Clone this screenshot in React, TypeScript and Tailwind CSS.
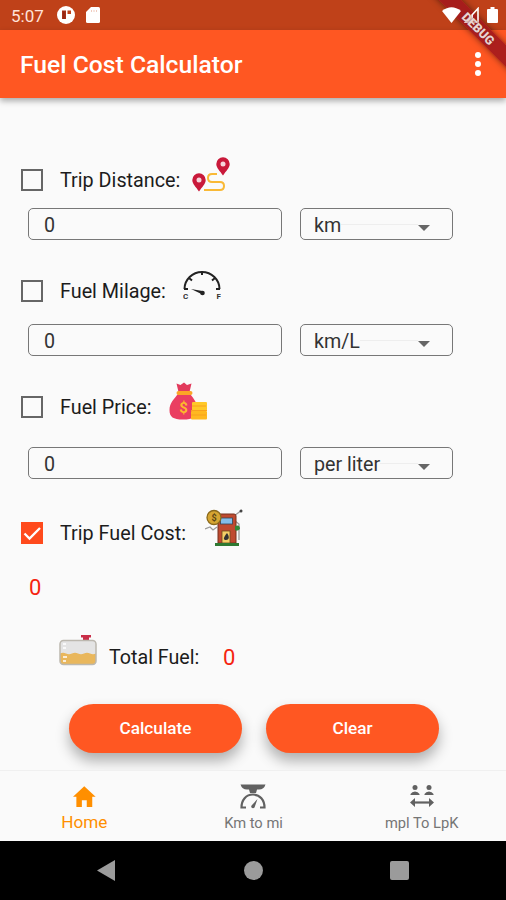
import { useState } from "react";
import type { ReactNode } from "react";

export default function App() {
    const [checked, setChecked] = useState("cost");

    return (
        <div className="relative flex h-[900px] w-[506px] flex-col overflow-hidden bg-[#fafafa] font-['Roboto',sans-serif] text-[#1c1c1c]">
            <DebugBanner />
            <StatusBar />
            <header className="flex h-[68px] shrink-0 items-center justify-between bg-[#ff5722] pr-[25px] pl-5 shadow-[0_3px_6px_rgba(0,0,0,0.32)]">
                <h1 className="pt-[3px] text-[24.7px] leading-none font-medium text-white">
                    Fuel Cost Calculator
                </h1>
                <button
                    className="flex flex-col gap-[2.500px]"
                    aria-label="Menu"
                >
                    <span className="size-[6.500px] rounded-full bg-white" />
                    <span className="size-[6.500px] rounded-full bg-white" />
                    <span className="size-[6.500px] rounded-full bg-white" />
                </button>
            </header>

            <main className="flex h-[672px] shrink-0 flex-col pt-[62px]">
                <FieldLabel
                    label="Trip Distance:"
                    checked={checked === "distance"}
                    onClick={() => setChecked("distance")}
                >
                    <div className="mb-[11px] ml-3">
                        <RouteIcon />
                    </div>
                </FieldLabel>
                <FieldInputs unit="km" className="mt-2" />

                <FieldLabel
                    label="Fuel Milage:"
                    checked={checked === "milage"}
                    onClick={() => setChecked("milage")}
                    className="mt-[31px]"
                >
                    <div className="mb-[7px] ml-[17px]">
                        <GaugeIcon />
                    </div>
                </FieldLabel>
                <FieldInputs unit="km/L" className="mt-[13px]" />

                <FieldLabel
                    label="Fuel Price:"
                    checked={checked === "price"}
                    onClick={() => setChecked("price")}
                    className="mt-[31px]"
                >
                    <div className="mb-[13px] ml-[18px]">
                        <MoneyBagIcon />
                    </div>
                </FieldLabel>
                <FieldInputs unit="per liter" className="mt-5" />

                <FieldLabel
                    label="Trip Fuel Cost:"
                    checked={checked === "cost"}
                    onClick={() => setChecked("cost")}
                    className="mt-[34px]"
                >
                    <div className="mb-[11px] ml-[19px]">
                        <PumpIcon />
                    </div>
                </FieldLabel>
                <p className="mt-[23px] ml-[29px] h-6 text-[22px] leading-6 text-[#f5240f]">
                    0
                </p>

                <div className="mt-[37px] ml-[59px] flex h-10 items-center text-[19.7px]">
                    <div className="mb-[13px] w-[50px]">
                        <TankIcon />
                    </div>
                    <span className="w-[114px] pt-px whitespace-nowrap">
                        Total Fuel:
                    </span>
                    <span className="text-[22px] text-[#f5240f]">0</span>
                </div>

                <div className="mt-[27px] ml-[69px] flex gap-6">
                    <PillButton>Calculate</PillButton>
                    <PillButton>Clear</PillButton>
                </div>
            </main>

            <nav className="relative grid h-[71px] shrink-0 grid-cols-3 border-t border-[#f0f0f0] bg-[#fafafa]">
                <div className="flex flex-col items-center pt-[11px] text-[#ff8f00]">
                    <svg width="30" height="30" viewBox="0 0 24 24">
                        <path
                            d="M10.300 20v-5.500h3.900V20h4.400v-8.300h2.700L12.200 3.400 3.200 11.700h2.700V20z"
                            fill="currentColor"
                        />
                    </svg>
                    <span className="text-[17.2px] leading-5">Home</span>
                </div>
                <div className="flex flex-col items-center pt-[11px] pl-[1px] text-[#616161]">
                    <ScaleIcon />
                    <span className="mt-[1px] text-[14.7px] leading-5 text-[#757575]">
                        Km to mi
                    </span>
                </div>
                <div className="flex flex-col items-center pt-[11px] text-[#616161]">
                    <DistanceIcon />
                    <span className="mt-[1px] text-[14.7px] leading-5 text-[#757575]">
                        mpl To LpK
                    </span>
                </div>
            </nav>

            <footer className="flex h-[59px] shrink-0 items-center justify-between bg-black px-[97px]">
                <svg width="18" height="21" viewBox="0 0 18 21">
                    <path d="M0 10.500 18 0v21z" fill="#9b9b9b" />
                </svg>
                <span className="ml-px size-[19px] rounded-full bg-[#9b9b9b]" />
                <span className="size-[19px] rounded-[2px] bg-[#9b9b9b]" />
            </footer>
        </div>
    );
}

function StatusBar() {
    return (
        <div className="flex h-[30px] shrink-0 items-center justify-between bg-[#bf4119] pr-2 pl-[11px] text-white">
            <div className="flex items-center">
                <span className="w-[46px] pt-[2px] text-[17px] leading-none text-[#ffe3da]">
                    5:07
                </span>
                <svg width="18" height="18" viewBox="0 0 18 18">
                    <circle cx="9" cy="9" r="9" fill="#fff" />
                    <path d="M5 4.500h4V13H5z" fill="#a8301a" />
                    <path d="M10.500 4.500H14V8h-3.500z" fill="#bf4119" />
                    <path d="M6.300 5.500h1.200V13H6.300z" fill="#8c2411" />
                </svg>
                <svg
                    className="ml-[11px]"
                    width="14"
                    height="16"
                    viewBox="0 0 14 16"
                >
                    <path
                        d="M5 0h7.500q1.500 0 1.500 1.500v13q0 1.500-1.500 1.500h-11Q0 16 0 14.500V5z"
                        fill="#fff"
                    />
                    <path d="M5.500 3v2M8 3v2M10.500 3v2" stroke="#f0cabd" />
                </svg>
            </div>
            <div className="relative z-20 flex items-center">
                <svg width="19" height="16" viewBox="0 0 19 16">
                    <path d="M0 4Q9.500-3.500 19 4L9.500 16z" fill="#fff" />
                </svg>
                <svg
                    className="ml-[3px]"
                    width="15"
                    height="16"
                    viewBox="0 0 15 16"
                >
                    <path
                        d="M1.500 15 14 1.500V15z"
                        fill="none"
                        stroke="#fff"
                        strokeWidth="1.600"
                    />
                    <path d="M1 15.500 9 7v8.500z" fill="#fff" />
                </svg>
                <svg
                    className="ml-[8px]"
                    width="11"
                    height="16"
                    viewBox="0 0 11 16"
                >
                    <path
                        d="M3.500 0h4v2H10q1 0 1 1v12q0 1-1 1H1q-1 0-1-1V3q0-1 1-1h2.500z"
                        fill="#fff"
                    />
                </svg>
            </div>
        </div>
    );
}

function DebugBanner() {
    return (
        <>
            <div className="pointer-events-none absolute top-[20px] left-[418px] z-10 h-4 w-[120px] rotate-45 bg-[#a3191d]/90 shadow-[0_0_6px_rgba(0,0,0,0.5)]" />
            <span className="pointer-events-none absolute top-[21px] left-[418px] z-30 w-[120px] rotate-45 text-center text-[12.500px] leading-4 font-black text-[#e9d3d0] [text-shadow:0_0_2px_#7c2020]">
                DEBUG
            </span>
        </>
    );
}

function FieldLabel({
    label,
    checked,
    onClick,
    className = "",
    children,
}: {
    label: string;
    checked: boolean;
    onClick: () => void;
    className?: string;
    children: ReactNode;
}) {
    return (
        <div
            className={`flex h-10 shrink-0 items-center pl-[21px] ${className}`}
        >
            <button
                onClick={onClick}
                aria-label={label}
                className={
                    checked
                        ? "size-[22px] bg-[#ff4a1c]"
                        : "size-[22px] border-2 border-[#666]"
                }
            >
                {checked && (
                    <svg width="22" height="22" viewBox="0 0 22 22">
                        <path
                            d="m3.500 11.500 5 5L19 6"
                            fill="none"
                            stroke="#fff"
                            strokeWidth="2.300"
                        />
                    </svg>
                )}
            </button>
            <span className="ml-[17px] pt-[2px] text-[19.8px] leading-none whitespace-nowrap">
                {label}
            </span>
            {children}
        </div>
    );
}

function FieldInputs({ unit, className }: { unit: string; className: string }) {
    return (
        <div className={`flex h-8 shrink-0 gap-[18px] pl-7 ${className}`}>
            <input
                defaultValue="0"
                className="w-[254px] rounded-[5px] border-[1.5px] border-[#777] px-[15px] pt-[3px] text-[19.7px] text-[#333] outline-none"
            />
            <button className="flex w-[153px] items-center rounded-[5px] border-[1.5px] border-[#777] pr-[22px] pl-[13px] text-[19.7px] text-[#333]">
                <span className="pt-[3px] whitespace-nowrap">{unit}</span>
                <span className="h-px flex-1 bg-[#eee]" />
                <svg
                    className="mt-[8px]"
                    width="12"
                    height="6"
                    viewBox="0 0 12 6"
                >
                    <path d="M0 0h12L6 6z" fill="#666" />
                </svg>
            </button>
        </div>
    );
}

function PillButton({ children }: { children: ReactNode }) {
    return (
        <button className="h-[49px] w-[173px] rounded-full bg-[#ff5722] text-[17.2px] font-medium text-white shadow-[0_8px_14px_rgba(0,0,0,0.3)]">
            {children}
        </button>
    );
}

function RouteIcon() {
    return (
        <svg width="38" height="38" viewBox="0 0 38 38">
            <path
                d="M12 34h16q4 0 4-4t-4-4h-8q-4 0-4-4t4-4h5"
                fill="none"
                stroke="#f9b936"
                strokeWidth="2"
            />
            <path
                d="M7 35.500C4 31 .3 28 .3 24a6.700 6.700 0 0 1 13.400 0C13.700 28 10 31 7 35.500z"
                fill="#c9193a"
            />
            <circle cx="7" cy="24" r="2.500" fill="#f6d5dc" />
            <path
                d="M31 19.500C28 15 24.300 12 24.300 8a6.700 6.700 0 0 1 13.400 0C37.700 12 34 15 31 19.500z"
                fill="#c9193a"
            />
            <circle cx="31" cy="8" r="2.500" fill="#f6d5dc" />
        </svg>
    );
}

function GaugeIcon() {
    return (
        <svg width="38" height="38" viewBox="0 0 38 38">
            <path
                d="M1.500 20a17.500 17 0 0 1 35 0"
                fill="none"
                stroke="#222"
                strokeWidth="2"
            />
            <path
                d="M1 20h4M33 20h4M6 9l3 2.500M32 9l-3 2.500M19 3v3"
                stroke="#222"
                strokeWidth="2"
            />
            <path d="m8 20 11.500 2-1 3z" fill="#222" />
            <circle cx="19.500" cy="24" r="2.300" fill="#222" />
            <text x="0" y="30" fontSize="8" fontWeight="700" fill="#333">
                C
            </text>
            <text x="33.500" y="30" fontSize="8" fontWeight="700" fill="#333">
                F
            </text>
        </svg>
    );
}

function MoneyBagIcon() {
    return (
        <svg width="40" height="38" viewBox="0 0 40 38">
            <path
                d="m7.500 1.500 4 1.500L15 .5 18 3l4.500-1.500-2 8.500h-11z"
                fill="#e23a5c"
            />
            <path
                d="M9 12h12c4 5 7.500 9 7.500 15.500C28.500 35 24 37.500 14 37.500S.5 35 .5 28C.5 21 5 17 9 12z"
                fill="#ea3e61"
            />
            <rect
                x="7.500"
                y="9"
                width="16"
                height="4"
                rx="2"
                fill="#fba526"
            />
            <text
                x="14.500"
                y="31"
                fontSize="15"
                fontWeight="700"
                textAnchor="middle"
                fill="#fcb92c"
            >
                $
            </text>
            <rect
                x="23"
                y="20"
                width="15"
                height="8.500"
                rx="1"
                fill="#ffc928"
            />
            <rect
                x="22"
                y="29"
                width="16"
                height="8.500"
                rx="1"
                fill="#ffb820"
            />
            <path
                d="M23 24h14M22 28.500h16M22 33h15"
                stroke="#f9a01f"
                strokeWidth="1"
            />
        </svg>
    );
}

function PumpIcon() {
    return (
        <svg width="38" height="38" viewBox="0 0 38 38">
            <path
                d="m29 7 8-6M30 12l4 3v16M0 20l5-2 3 3 4-3"
                fill="none"
                stroke="#9a9a9a"
                strokeWidth="1.300"
            />
            <circle cx="36" cy="2" r="1.500" fill="#444" />
            <path
                d="M13 7q0-2 2-2h14q2 0 2 2v27H13z"
                fill="#bf4a30"
                stroke="#77301f"
            />
            <rect
                x="15.500"
                y="9"
                width="12"
                height="6"
                fill="#83bde9"
                stroke="#345"
                strokeWidth=".8"
            />
            <rect
                x="17"
                y="22"
                width="8"
                height="12"
                fill="#f4cf67"
                stroke="#6b4a1c"
                strokeWidth=".8"
            />
            <path d="M22 24c3 4 2 7-1 7s-3-2 1-7z" fill="#333" />
            <path d="M30 17q5-2 5 3-3 3-5 1z" fill="#348838" />
            <path d="M10 34h24v3H10z" fill="#2f7932" />
            <circle
                cx="9"
                cy="8.500"
                r="7"
                fill="#d5a532"
                stroke="#8a691b"
                strokeWidth="1.300"
            />
            <text
                x="9"
                y="12"
                fontSize="9"
                fontWeight="700"
                textAnchor="middle"
                fill="#5b4515"
            >
                $
            </text>
        </svg>
    );
}

function TankIcon() {
    return (
        <svg width="38" height="38" viewBox="0 0 38 38">
            <path d="M22 3h10v2.500h-2V9h-6V5.500h-2z" fill="#c92d48" />
            <rect
                x="1"
                y="8.500"
                width="36"
                height="24"
                rx="3.500"
                fill="#e4e4e4"
            />
            <path
                d="M1 21.500q3-1.500 6 0t6 0 6 0 6 0 6 0 6 0V29q0 3.500-3.500 3.500h-29Q1 32.500 1 29z"
                fill="#e9b75c"
            />
            <path
                d="M4 12h3M4 16h3M4 25h4M4 29h3"
                stroke="#fff"
                strokeWidth="1.500"
            />
            <rect
                x="1"
                y="8.500"
                width="36"
                height="24"
                rx="3.500"
                fill="none"
                stroke="#bcb8af"
                strokeWidth="1.500"
            />
        </svg>
    );
}

function ScaleIcon() {
    return (
        <svg width="28" height="30" viewBox="0 0 28 30">
            <path
                d="M1.500 2.500h25q-1.500 5-6.500 5h-2L17 11h-6l-1-3.500H8q-5 0-6.500-5z"
                fill="currentColor"
            />
            <path
                d="M7 25.500H2.500C2.500 18 7 12.500 14 12.500s11.500 5.500 11.500 13H21"
                fill="none"
                stroke="currentColor"
                strokeWidth="2.200"
            />
            <path
                d="m18.500 17-3 8.500q-1.500 1.500-3 0-.8-1.500.5-2.500z"
                fill="currentColor"
            />
        </svg>
    );
}

function DistanceIcon() {
    return (
        <svg width="26" height="30" viewBox="0 0 26 30">
            <circle cx="6" cy="5.500" r="2.500" fill="currentColor" />
            <circle cx="20" cy="5.500" r="2.500" fill="currentColor" />
            <path
                d="M1.500 13v-1Q3 9.500 6 9.500t4.500 2.500v1zM15.500 13v-1q1.500-2.500 4.500-2.500t4.500 2.500v1z"
                fill="currentColor"
            />
            <path
                d="M4 20.500h18"
                stroke="currentColor"
                strokeWidth="2.200"
            />
            <path
                d="M1 20.500 6 16v9zM25 20.500 20 16v9z"
                fill="currentColor"
            />
        </svg>
    );
}
